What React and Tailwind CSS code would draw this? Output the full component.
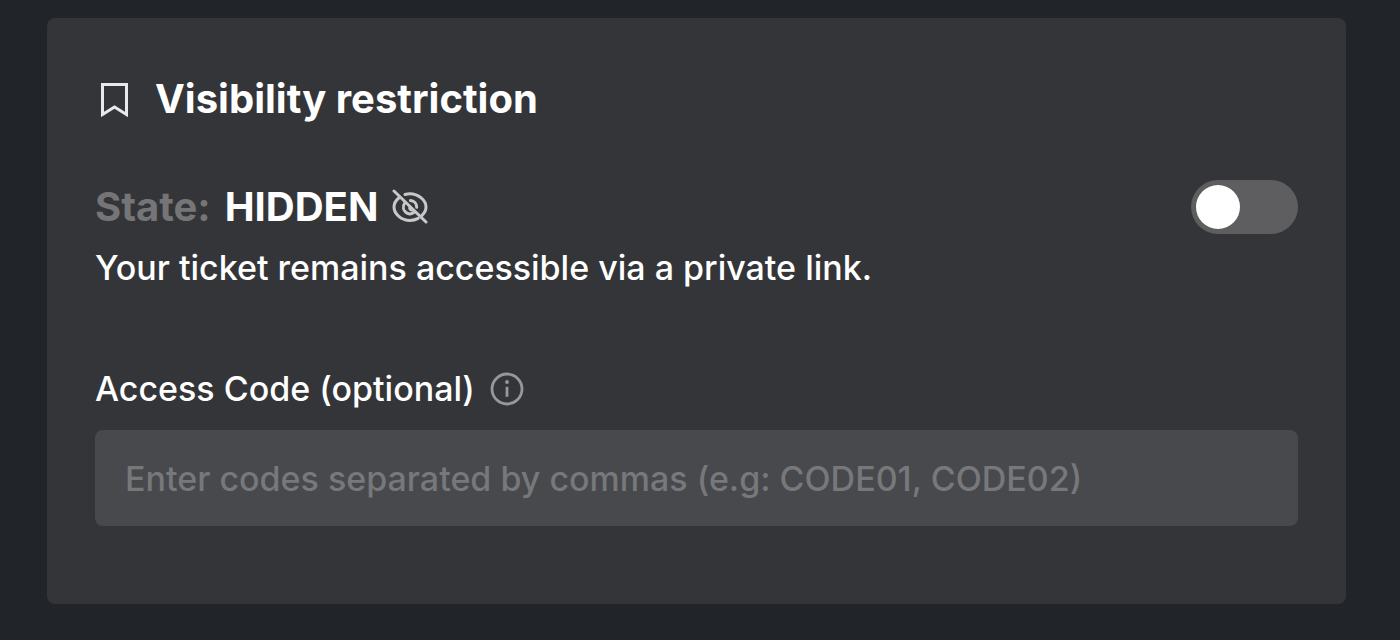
import { useState } from 'react';

function BookmarkIcon() {
  return (
    <svg className="w-9 h-9 shrink-0" viewBox="0 0 36 36" fill="none" stroke="#e9e9eb" strokeWidth="3" aria-hidden="true">
      <path d="M7.500 3.500H31.500V33.500L19.500 26L7.500 33.500Z" />
    </svg>
  );
}

function HiddenIcon() {
  return (
    <svg className="w-9 h-9 shrink-0" viewBox="0 0 36 36" fill="none" stroke="#c8c8ca" strokeWidth="3" strokeLinecap="round" aria-hidden="true">
      <path d="M2 2L34 33" />
      <path d="M13 5.500C14.600 5 16.300 4.700 18 4.700C26.500 4.700 34 11.500 34 18C34 21 32.500 24 30 26.400" />
      <path d="M6.800 9C3.800 11.500 2 15 2 18C2 25 9.500 31.400 18 31.400C21 31.400 23.800 30.700 26.200 29.400" />
      <path d="M18.500 11.500C22 11.700 24.700 14.500 24.700 18.200" />
      <path d="M12.600 14.300C10.500 17.500 11.200 21.400 14 23.500C16.300 25.200 19.400 25.200 21.800 23.500" />
      <path d="M18 17.800C17.200 19.500 18.200 20.800 19.800 21" />
    </svg>
  );
}

function InfoIcon() {
  return (
    <svg className="w-9 h-9 shrink-0" viewBox="0 0 36 36" fill="none" stroke="#98989b" strokeWidth="2.800" aria-hidden="true">
      <circle cx="18" cy="18" r="15" />
      <path d="M18 15.800V25.800" />
      <circle cx="18" cy="11" r="1.900" fill="#98989b" stroke="none" />
    </svg>
  );
}

export default function App() {
  const [visible, setVisible] = useState(false);
  const [codes, setCodes] = useState('');

  return (
    <div className="min-h-screen bg-[#212429] pl-[47px] pr-[54px] pt-[18px] pb-9 font-['Inter',sans-serif] text-white">
      <section className="rounded-lg bg-[#343538] px-12 pt-14 pb-[78px]">
        {/* Title */}
        <div className="flex items-center gap-6 h-[50px]">
          <BookmarkIcon />
          <h2 className="text-[40px] leading-[50px] font-bold">Visibility restriction</h2>
        </div>

        {/* Visibility state */}
        <div className="flex items-center justify-between mt-14">
          <div className="flex items-center gap-[14px] text-[40px] leading-[54px] font-bold">
            <span className="text-[#757577]">State:</span>
            <span>{visible ? 'VISIBLE' : 'HIDDEN'}</span>
            <HiddenIcon />
          </div>
          <label className="relative block cursor-pointer">
            <input
              type="checkbox"
              role="switch"
              aria-label="Ticket visibility"
              checked={visible}
              onChange={(e) => setVisible(e.target.checked)}
              className="peer block appearance-none w-[107px] h-[54px] rounded-full bg-[#5e5e60] checked:bg-green-600 cursor-pointer"
            />
            <span className="absolute top-[5px] left-[5px] w-11 h-11 rounded-full bg-white peer-checked:left-[58px]" />
          </label>
        </div>
        <p className="mt-2 text-[34px] leading-[52px] font-medium">Your ticket remains accessible via a private link.</p>

        {/* Access codes */}
        <div className="flex items-center gap-[14px] mt-[69px]">
          <label htmlFor="codes" className="text-[34px] leading-[52px] font-medium">Access Code (optional)</label>
          <InfoIcon />
        </div>
        <input
          id="codes"
          type="text"
          value={codes}
          onChange={(e) => setCodes(e.target.value)}
          placeholder="Enter codes separated by commas (e.g: CODE01, CODE02)"
          className="block w-full h-24 mt-[15px] px-[30px] rounded-lg bg-[#48494c] text-[34px] font-medium placeholder:text-[#77787b] outline-none"
        />
      </section>
    </div>
  );
}
